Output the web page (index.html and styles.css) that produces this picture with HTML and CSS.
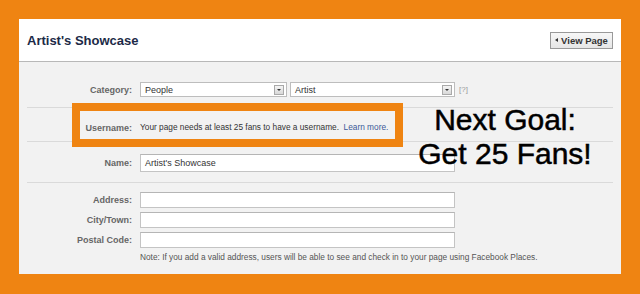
FILE: index.html
```html
<!DOCTYPE html>
<html>
<head>
<meta charset="utf-8">
<link rel="stylesheet" href="styles.css">
</head>
<body>
<div class="panel">
  <div class="header">
    <h1 class="title">Artist's Showcase</h1>
    <span class="viewbtn"><span class="tri"></span>View Page</span>
  </div>
  <div class="form">
    <div class="row row-cat">
      <div class="label">Category:</div>
      <div class="field">
        <div class="select sel1"><span>People</span><span class="drop"></span></div>
        <div class="select sel2"><span>Artist</span><span class="drop"></span></div>
        <span class="help">[?]</span>
      </div>
    </div>
    <div class="row row-user">
      <div class="label">Username:</div>
      <div class="field text">Your page needs at least 25 fans to have a username.  <a class="link">Learn more.</a></div>
    </div>
    <div class="row row-name">
      <div class="label">Name:</div>
      <div class="field"><div class="input big">Artist's Showcase</div></div>
    </div>
    <div class="row row-addr">
      <div class="label">Address:</div>
      <div class="field"><div class="input"></div></div>
      <div class="label">City/Town:</div>
      <div class="field"><div class="input"></div></div>
      <div class="label">Postal Code:</div>
      <div class="field"><div class="input"></div></div>
      <div class="label"></div>
      <div class="field note">Note: If you add a valid address, users will be able to see and check in to your page using Facebook Places.</div>
    </div>
  </div>
  <div class="highlight"></div>
  <div class="goal">Next Goal:<br>Get 25 Fans!</div>
</div>
</body>
</html>
```
FILE: styles.css
```css
html, body {
  margin: 0;
  padding: 0;
}
body {
  background: #ef8412;
  width: 640px;
  height: 294px;
  overflow: hidden;
  font-family: "Liberation Sans", Arial, sans-serif;
  padding-top: 19px;
  box-sizing: border-box;
}
.panel {
  position: relative;
  margin-left: 19px;
  width: 602px;
  height: 255px;
  background: #f2f2f2;
  box-sizing: border-box;
}
.header {
  height: 42px;
  background: #fff;
  border-bottom: 1px solid #b8b8b8;
  display: flex;
  align-items: center;
  justify-content: space-between;
  padding: 0 8px;
}
.title {
  margin: 0;
  font-size: 13px;
  font-weight: bold;
  color: #1c2a47;
}
.viewbtn {
  display: flex;
  align-items: center;
  justify-content: center;
  gap: 3px;
  height: 15px;
  width: 61px;
  border: 1px solid #999;
  background: linear-gradient(#f7f7f7, #e6e6e6);
  font-size: 9.5px;
  font-weight: bold;
  color: #333;
}
.tri {
  width: 0;
  height: 0;
  border-top: 2.5px solid transparent;
  border-bottom: 2.5px solid transparent;
  border-right: 3px solid #333;
}
.form {
  padding: 0 8px;
}
.row {
  display: grid;
  grid-template-columns: 105px 1fr;
  column-gap: 8px;
  border-bottom: 1px solid #dadada;
  align-items: center;
}
.label {
  text-align: right;
  font-size: 9px;
  font-weight: bold;
  color: #666;
}
.row-cat {
  height: 46px;
  padding-top: 20px;
  padding-bottom: 11px;
  box-sizing: border-box;
}
.field {
  display: flex;
  align-items: center;
}
.select {
  height: 15px;
  box-sizing: border-box;
  border: 1px solid #bdbdbd;
  background: #fff;
  display: flex;
  align-items: center;
  justify-content: space-between;
  padding: 0 2px 0 4px;
  font-size: 9px;
  color: #333;
}
.sel1 { width: 147px; margin-right: 3px; }
.sel2 { width: 165px; }
.drop {
  width: 10px;
  height: 10px;
  box-sizing: border-box;
  border: 1px solid #a9a9a9;
  background: linear-gradient(#f4f4f4, #d8d8d8);
  position: relative;
}
.drop::after {
  content: "";
  position: absolute;
  left: 2px;
  top: 3px;
  border-left: 2px solid transparent;
  border-right: 2px solid transparent;
  border-top: 2px solid #333;
}
.help {
  font-size: 8px;
  color: #9a9a9a;
  margin-left: 4px;
}
.row-user {
  height: 34px;
  padding-top: 4px;
  box-sizing: border-box;
}
.row-user .label {
  padding-top: 2px;
}
.text {
  font-size: 8.3px;
  color: #333;
  white-space: pre;
}
.link {
  color: #3b5998;
}
.row-name {
  height: 41px;
  padding-top: 12px;
  padding-bottom: 10px;
  box-sizing: border-box;
}
.input {
  width: 315px;
  height: 16px;
  box-sizing: border-box;
  border: 1px solid #c4c4c4;
  border-top-color: #b5b5b5;
  background: #fff;
  font-size: 9px;
  color: #333;
  padding: 0 4px;
  display: flex;
  align-items: center;
}
.input.big {
  height: 18px;
}
.row-addr {
  border-bottom: none;
  padding-top: 9px;
  row-gap: 4px;
}
.note {
  font-size: 8.3px;
  color: #555;
  white-space: nowrap;
  height: 10px;
}
.highlight {
  position: absolute;
  left: 53px;
  top: 84px;
  width: 331px;
  height: 44px;
  box-sizing: border-box;
  border: 8px solid #ef8412;
}
.goal {
  position: absolute;
  left: 390px;
  top: 84px;
  width: 192px;
  text-align: center;
  font-size: 30px;
  line-height: 34px;
  color: #000;
  -webkit-text-stroke: 0.5px #000;
}
```
